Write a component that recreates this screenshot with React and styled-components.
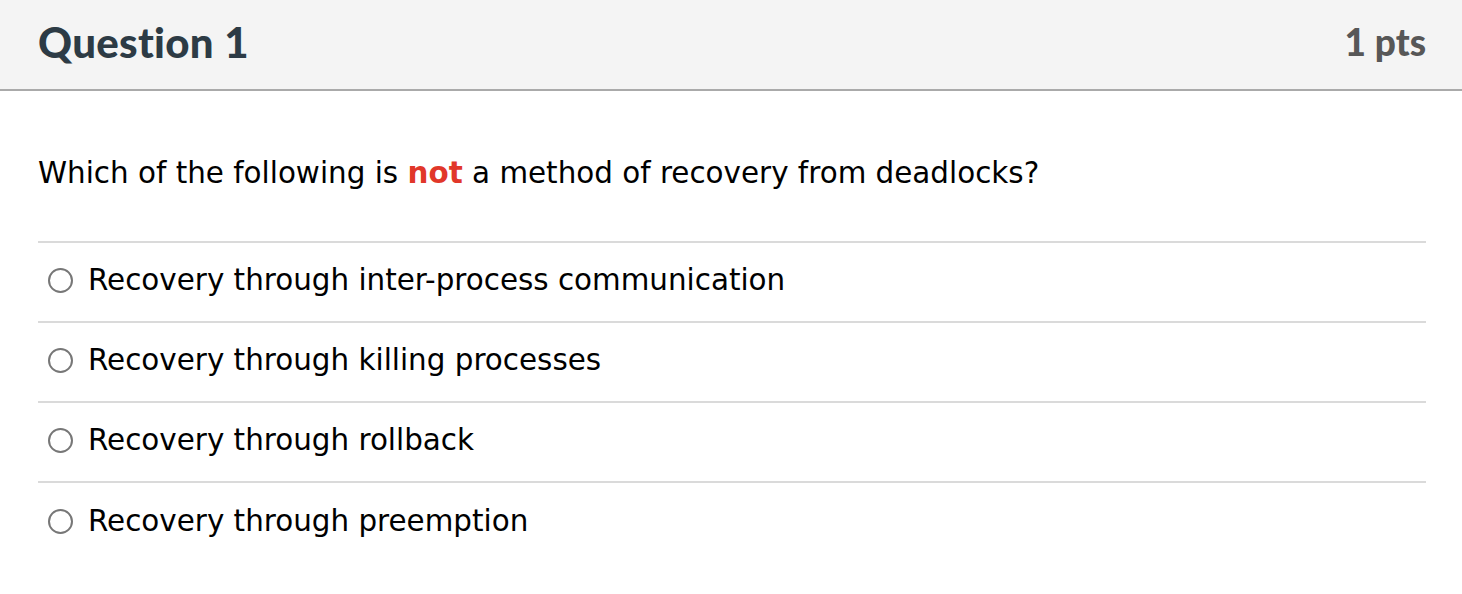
import React from "react";
import styled, { createGlobalStyle } from "styled-components";

const GlobalStyle = createGlobalStyle`
  html, body {
    margin: 0;
    padding: 0;
    background: #fff;
  }
`;

const answers = [
  "Recovery through inter-process communication",
  "Recovery through killing processes",
  "Recovery through rollback",
  "Recovery through preemption",
];

const App = () => {
  return (
    <QuizCard>
      <GlobalStyle />
      <Header>
        <Title>Question 1</Title>
        <Points>1 pts</Points>
      </Header>
      <Body>
        <QuestionText>
          Which of the following is <Highlight>not</Highlight> a method of
          recovery from deadlocks?
        </QuestionText>
        <AnswerList>
          {answers.map((a) => (
            <AnswerRow key={a}>
              <Radio />
              <AnswerLabel>{a}</AnswerLabel>
            </AnswerRow>
          ))}
        </AnswerList>
      </Body>
    </QuizCard>
  );
};

const QuizCard = styled.div`
  width: 100%;
  min-height: 594px;
  background: #fff;
`;

const Header = styled.div`
  box-sizing: border-box;
  height: 91px;
  background: #f4f4f4;
  border-bottom: 2px solid #aaaaaa;
  display: flex;
  align-items: center;
  justify-content: space-between;
  padding: 0 36px 6px 38px;
`;

const Title = styled.h2`
  margin: 0;
  font-family: "Lato", "Open Sans", sans-serif;
  font-weight: 900;
  font-size: 42px;
  color: #2d3b45;
  letter-spacing: 0.3px;
`;

const Points = styled.div`
  font-family: "Lato", "Open Sans", sans-serif;
  font-weight: 900;
  font-size: 37px;
  color: #575757;
`;

const Body = styled.div`
  padding: 0 36px 0 38px;
`;

const QuestionText = styled.p`
  margin: 0;
  padding-top: 62px;
  height: 88px;
  font-family: "DejaVu Sans", Verdana, sans-serif;
  font-size: 29.4px;
  line-height: 40px;
  color: #000;
`;

const Highlight = styled.strong`
  color: #e1372a;
  font-weight: 700;
`;

const AnswerList = styled.div`
  border-top: 2px solid #dadada;
`;

const AnswerRow = styled.div`
  box-sizing: border-box;
  height: 80px;
  display: flex;
  align-items: center;
  border-bottom: 2px solid #dadada;
  padding: 0 0 4px 10px;

  &:last-child {
    border-bottom: none;
  }
`;

const Radio = styled.span`
  box-sizing: border-box;
  width: 25px;
  height: 25px;
  border: 2px solid #777777;
  border-radius: 50%;
  margin-right: 15px;
  flex-shrink: 0;
`;

const AnswerLabel = styled.span`
  font-family: "DejaVu Sans", Verdana, sans-serif;
  font-size: 29.4px;
  color: #000;
`;

export default App;
